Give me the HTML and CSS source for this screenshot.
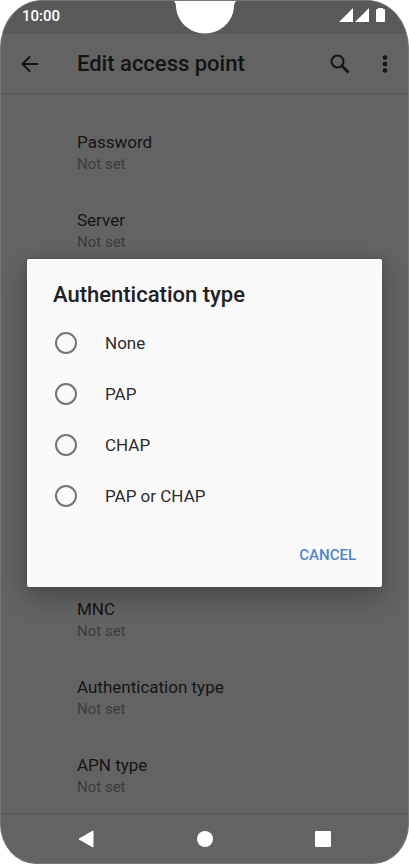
FILE: index.html
```html
<!DOCTYPE html>
<html lang="en">
<head>
<meta charset="utf-8">
<meta name="viewport" content="width=device-width, initial-scale=1">
<title>Edit access point</title>
<link rel="stylesheet" href="styles.css">
</head>
<body>
<div class="phone">
  <div class="status">
    <span class="clock">10:00</span>
    <svg class="notch" width="70" height="35" viewBox="0 0 70 35" aria-hidden="true"><path d="M0 0C4 0 6 2 6 7C7 22 20 33.500 35 33.500S63 22 64 7C64 2 66 0 70 0Z" fill="#fff"/></svg>
    <svg class="signals" width="46" height="16" viewBox="0 0 46 16" aria-hidden="true"><path d="M0 14L14 0V14ZM16 14L30 0V14ZM37 2Q37 1 38 1H39V0H44V1H45Q46 1 46 2V13Q46 14 45 14H38Q37 14 37 13Z" fill="#fff"/></svg>
  </div>
  <header class="toolbar">
    <button class="icon-button" aria-label="Back"><svg width="18" height="18" viewBox="0 0 18 18"><path d="M17 9H2M9 1.500L1.500 9L9 16.500" fill="none" stroke="#141414" stroke-width="2"/></svg></button>
    <h1 class="title">Edit access point</h1>
    <button class="icon-button" aria-label="Search"><svg width="20" height="20" viewBox="0 0 20 20"><circle cx="7.500" cy="7.500" r="6" fill="none" stroke="#141414" stroke-width="2"/><path d="M12 12L18.500 18.500" stroke="#141414" stroke-width="2.600"/></svg></button>
    <button class="icon-button more" aria-label="More options"><svg width="6" height="18" viewBox="0 0 6 18" fill="#141414"><circle cx="3" cy="2.500" r="2.300"/><circle cx="3" cy="9" r="2.300"/><circle cx="3" cy="15.500" r="2.300"/></svg></button>
  </header>
  <main class="content">
    <ul class="settings">
      <li class="setting"><span class="name">Password</span><span class="value">Not set</span></li>
      <li class="setting"><span class="name">Server</span><span class="value">Not set</span></li>
    </ul>
    <form class="dialog" role="dialog" aria-labelledby="dialog-title">
      <h2 class="title" id="dialog-title">Authentication type</h2>
      <div class="options">
        <label class="option"><input class="radio" type="radio" name="auth">None</label>
        <label class="option"><input class="radio" type="radio" name="auth">PAP</label>
        <label class="option"><input class="radio" type="radio" name="auth">CHAP</label>
        <label class="option"><input class="radio" type="radio" name="auth">PAP or CHAP</label>
      </div>
      <button class="cancel" type="button">CANCEL</button>
    </form>
    <ul class="settings">
      <li class="setting"><span class="name">MNC</span><span class="value">Not set</span></li>
      <li class="setting"><span class="name">Authentication type</span><span class="value">Not set</span></li>
      <li class="setting"><span class="name">APN type</span><span class="value">Not set</span></li>
    </ul>
  </main>
  <nav class="navbar">
    <button class="icon-button" aria-label="Back"><svg width="18" height="18" viewBox="0 0 18 18"><path d="M1 9L15 1V17Z" fill="#fff" stroke="#fff" stroke-linejoin="round"/></svg></button>
    <button class="icon-button" aria-label="Home"><svg width="18" height="18" viewBox="0 0 18 18"><circle cx="9" cy="9" r="8" fill="#fff"/></svg></button>
    <button class="icon-button" aria-label="Recent apps"><svg width="18" height="18" viewBox="0 0 18 18"><rect x="1" y="1" width="16" height="16" rx="1" fill="#fff"/></svg></button>
  </nav>
</div>
</body>
</html>
```
FILE: styles.css
```css
* {
  box-sizing: border-box;
}

body {
  margin: 0;
  background: #fff;
  font-family: Roboto, "Liberation Sans", sans-serif;
}

.phone {
  display: flex;
  flex-direction: column;
  min-height: 100vh;
  overflow: hidden;
  border: 1px solid #777;
  border-radius: 42px 42px 36px 36px / 48px 48px 40px 40px;
  background: #636363;
}

.status {
  position: relative;
  display: flex;
  justify-content: space-between;
  height: 33px;
  padding: 7px 23px 0 21px;
  background: #595959;
}

.clock {
  color: #fff;
  font-size: 15px;
  font-weight: 500;
  line-height: 16px;
}

.notch {
  position: absolute;
  top: -1px;
  left: calc(50% - 35px);
}

.toolbar {
  display: flex;
  align-items: center;
  height: 60px;
  padding: 0 9px 0 15px;
  border-bottom: 1px solid #595959;
  box-shadow: 0 1px 2px #5c5c5c;
}

.icon-button {
  display: flex;
  align-items: center;
  justify-content: center;
  width: 28px;
  height: 28px;
  padding: 0;
  border: 0;
  background: none;
}

.more {
  margin-left: 17px;
}

.title {
  margin: 0;
  color: #202124;
  font-size: 22px;
  font-weight: 500;
  line-height: 24px;
}

.toolbar .title {
  flex: 1;
  margin-left: 33px;
  color: #141414;
}

.content {
  flex: 1;
}

.settings {
  margin: 0;
  padding: 0 16px 0 76px;
  list-style: none;
}

.settings:first-child {
  padding-top: 36px;
}

.setting {
  display: flex;
  flex-direction: column;
  height: 78px;
}

.settings:first-child .setting:last-child {
  height: 51px;
}

.settings:last-child .setting:last-child {
  height: 60px;
}

.name {
  color: #151515;
  font-size: 17px;
  line-height: 24px;
}

.value {
  color: #3c3c3c;
  font-size: 15px;
  line-height: 20px;
}

.dialog {
  position: relative;
  display: flex;
  flex-direction: column;
  margin: 0 26px 10px;
  padding: 24px 26px 14px;
  border-radius: 2px;
  background: #fafafa;
  box-shadow: 0 10px 26px rgba(0, 0, 0, 0.28), 0 0 6px rgba(0, 0, 0, 0.12);
}

.options {
  padding-top: 10px;
}

.option {
  display: flex;
  align-items: center;
  gap: 28px;
  height: 51px;
  color: #2c2c2c;
  font-size: 17px;
}

.radio {
  appearance: none;
  width: 22px;
  height: 22px;
  margin: 0 0 0 2px;
  border: 2px solid #757575;
  border-radius: 50%;
}

.cancel {
  align-self: flex-end;
  height: 36px;
  margin-top: 16px;
  padding: 0;
  border: 0;
  background: none;
  color: #4a86d8;
  font: 500 15px/20px Roboto, "Liberation Sans", sans-serif;
}

.navbar {
  display: flex;
  align-items: center;
  justify-content: center;
  gap: 90px;
  height: 50px;
  border-top: 1px solid #555;
}
```
